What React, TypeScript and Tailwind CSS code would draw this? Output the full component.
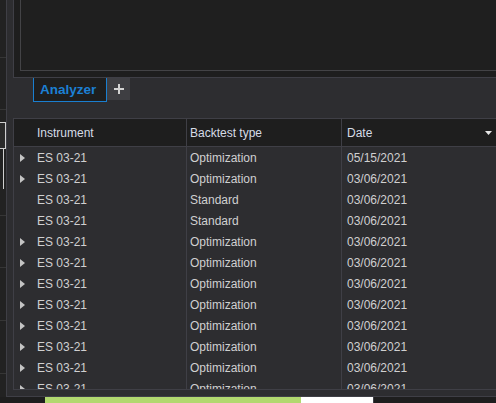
import React from "react";

interface Run {
  instrument: string;
  type: string;
  date: string;
  expandable: boolean;
}

const runs: Run[] = [
  { instrument: "ES 03-21", type: "Optimization", date: "05/15/2021", expandable: true },
  { instrument: "ES 03-21", type: "Optimization", date: "03/06/2021", expandable: true },
  { instrument: "ES 03-21", type: "Standard", date: "03/06/2021", expandable: false },
  { instrument: "ES 03-21", type: "Standard", date: "03/06/2021", expandable: false },
  ...Array.from({ length: 8 }, () => ({
    instrument: "ES 03-21",
    type: "Optimization",
    date: "03/06/2021",
    expandable: true,
  })),
];

const ExpandArrow = () => (
  <svg width="5" height="8" viewBox="0 0 5 8" className="shrink-0">
    <polygon points="0,0 5,4 0,8" fill="#c4c4c4" />
  </svg>
);

const PlusIcon = () => (
  <svg width="10" height="10" viewBox="0 0 10 10">
    <rect x="4" y="0" width="2" height="10" fill="#d2d2d2" />
    <rect x="0" y="4" width="10" height="2" fill="#d2d2d2" />
  </svg>
);

const SideStrip = () => (
  <div className="w-[7px] shrink-0 h-full bg-[#222222] border-r border-[#3f3f46] flex flex-col">
    <div className="h-[58px] border-b border-[#363636]" />
    <div className="h-[52px] border-b border-[#363636]" />
    <div className="h-[106px] border-b border-[#363636] pt-[12px]">
      <div className="w-[6px] h-[27px] border-t border-r border-b border-[#cfcfcf] bg-[#2a2a2a]" />
      <div className="ml-[3px] w-px h-[40px] bg-[#cfcfcf]" />
    </div>
    <div className="h-[52px] border-b border-[#363636]" />
    <div className="h-[53px] border-b border-[#363636]" />
    <div className="h-[53px] border-b border-[#363636]" />
    <div className="flex-1" />
  </div>
);

export default function App() {
  return (
    <div
      className="w-[496px] h-[403px] overflow-hidden flex flex-col bg-[#1e1e1e] text-[12px]"
      style={{ fontFamily: '"Liberation Sans", Arial, sans-serif' }}
    >
      <div className="h-[397px] flex shrink-0">
        <SideStrip />
        <div className="flex-1 min-w-0 bg-[#2d2d30] border-b border-[#3f3f46] pl-[6px] flex flex-col">
          {/* chart panel */}
          <div className="h-[78px] shrink-0 bg-[#1e1e1e] border-l border-b border-[#3f3f46] pl-[6px] pb-[6px]">
            <div className="h-full bg-[#1f1f1f] border-l border-b border-[#434346]" />
          </div>

          {/* tabs */}
          <div className="h-[40px] shrink-0 flex items-start pl-[20px]">
            <div className="w-[74px] h-[24px] bg-[#1e1e1e] border-l border-r border-b border-[#1a7fd0] flex items-center pl-[6px]">
              <span className="text-[13.5px] font-bold text-[#1c80d4] leading-none">Analyzer</span>
            </div>
            <div className="w-[23px] h-[22px] bg-[#3e3e42] flex items-center justify-center">
              <PlusIcon />
            </div>
          </div>

          {/* results grid */}
          <div className="h-[272px] shrink-0 border-t border-l border-b border-[#3f3f46] flex flex-col overflow-hidden">
            <div className="h-[28px] shrink-0 bg-[#1e1e1e] border-b border-[#3f3f46] flex text-[#d6dce6]">
              <div className="w-[173px] shrink-0 border-r border-[#3f3f46] flex items-center pl-[23px]">
                Instrument
              </div>
              <div className="w-[155px] shrink-0 border-r border-[#3f3f46] flex items-center pl-[3px]">
                Backtest type
              </div>
              <div className="flex-1 flex items-center justify-between pl-[5px] pr-[4px]">
                <span>Date</span>
                <svg width="7" height="4" viewBox="0 0 7 4">
                  <polygon points="0,0 7,0 3.5,4" fill="#e6e6e6" />
                </svg>
              </div>
            </div>
            <div className="flex-1 flex overflow-hidden text-[#d0d0d0]">
              <div className="w-[173px] shrink-0 border-r border-[#3f3f46] flex flex-col">
                {runs.map((r, i) => (
                  <div key={i} className="h-[21px] shrink-0 flex items-center pl-[6px]">
                    <div className="w-[17px] shrink-0">{r.expandable && <ExpandArrow />}</div>
                    <span>{r.instrument}</span>
                  </div>
                ))}
              </div>
              <div className="w-[155px] shrink-0 border-r border-[#3f3f46] flex flex-col">
                {runs.map((r, i) => (
                  <div key={i} className="h-[21px] shrink-0 flex items-center pl-[3px]">
                    {r.type}
                  </div>
                ))}
              </div>
              <div className="flex-1 flex flex-col">
                {runs.map((r, i) => (
                  <div key={i} className="h-[21px] shrink-0 flex items-center pl-[5px]">
                    {r.date}
                  </div>
                ))}
              </div>
            </div>
          </div>
        </div>
      </div>

      {/* status strip */}
      <div className="flex-1 flex bg-[#1e1e1e]">
        <div className="w-[45px] shrink-0" />
        <div className="w-[256px] shrink-0 bg-[#b1d86f]" />
        <div className="w-[72px] shrink-0 bg-white" />
        <div className="flex-1 border-l border-[#3f3f46]" />
      </div>
    </div>
  );
}
